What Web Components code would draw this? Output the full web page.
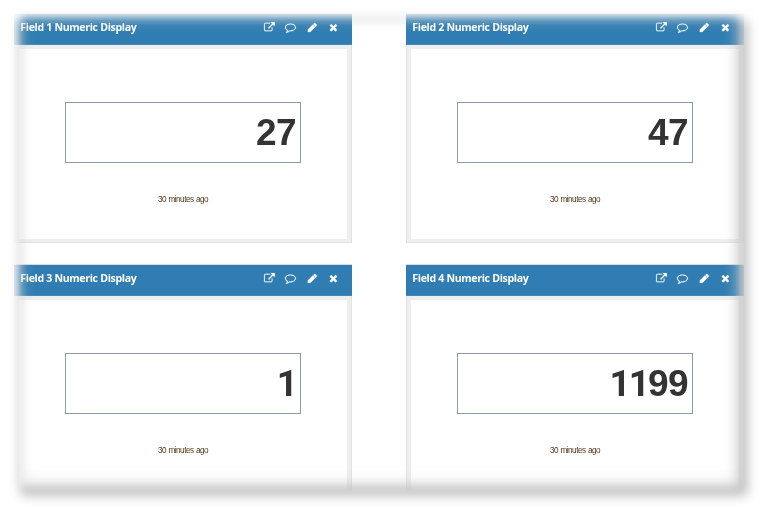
<!DOCTYPE html>
<html lang="en"><head><meta charset="utf-8"><title>Channel fields</title>
<style>html,body{margin:0;background:#fff;height:516px;overflow:hidden}</style></head><body>
<channel-board></channel-board>
<script>
const ICONS={
open:'M1408 928v320q0 119-84.5 203.5t-203.5 84.5h-832q-119 0-203.5-84.5t-84.5-203.5v-832q0-119 84.5-203.5t203.5-84.5h704q14 0 23 9t9 23v64q0 14-9 23t-23 9h-704q-66 0-113 47t-47 113v832q0 66 47 113t113 47h832q66 0 113-47t47-113v-320q0-14 9-23t23-9h64q14 0 23 9t9 23zm384-864v512q0 26-19 45t-45 19-45-19l-176-176-652 652q-10 10-23 10t-23-10l-114-114q-10-10-10-23t10-23l652-652-176-176q-19-19-19-45t19-45 45-19h512q26 0 45 19t19 45z',
comment:'M896 384q-204 0-381.5 69.5t-282 187.5-104.5 255q0 112 71.5 213.5t201.5 175.5l87 50-27 96q-24 91-70 172 152-63 275-171l43-38 57 6q69 8 130 8 204 0 381.5-69.5t282-187.5 104.5-255-104.5-255-282-187.5-381.5-69.5zm896 512q0 174-120 321.5t-326 233-450 85.5q-70 0-145-8-198 175-460 242-49 14-114 22h-5q-15 0-27-10.5t-16-27.5v-1q-3-4-.5-12t2-10 4.5-9.5l6-9 7-8.5 8-9q7-8 31-34.5t34.5-38 31-39.5 32.5-51 27-59 26-76q-157-89-247.5-220t-90.5-281q0-174 120-321.5t326-233 450-85.5 450 85.5 326 233 120 321.5z',
edit:'M960 416l416 416-832 832h-416v-416zm683 96q0 53-37 90l-166 166-416-416 166-165q36-38 90-38 53 0 91 38l235 234q37 39 37 91z',
close:'M1490 1322q0 40-28 68l-136 136q-28 28-68 28t-68-28l-294-294-294 294q-28 28-68 28t-68-28l-136-136q-28-28-28-68t28-68l294-294-294-294q-28-28-28-68t28-68l136-136q28-28 68-28t68 28l294 294 294-294q28-28 68-28t68 28l136 136q28 28 28 68t-28 68l-294 294 294 294q28 28 28 68z'};
class ToolIcon extends HTMLElement{
 connectedCallback(){this.attachShadow({mode:'open'}).innerHTML=`<style>:host{display:block;width:10.8px;height:10.8px}svg{display:block;width:100%;height:100%;fill:#fff;stroke:#fff;stroke-width:30;overflow:visible}</style><svg viewBox="0 0 1792 1792"><path d="${ICONS[this.getAttribute('name')]}"/></svg>`}
}
customElements.define('tool-icon',ToolIcon);
class NumericPanel extends HTMLElement{
 connectedCallback(){this.attachShadow({mode:'open'}).innerHTML=`<style>
 :host{display:flex;flex-direction:column;height:230px;box-sizing:border-box;background:#eee}
 header{flex:none;height:32px;box-sizing:border-box;display:flex;align-items:center;padding:0 12.8px 4px 6.3px;background:#2f7db2;border-top:1px solid #d5dde3;border-bottom:1px solid #4488b5;color:#fff;font:700 10.6px "Trebuchet MS","Open Sans",sans-serif;letter-spacing:-.34px}
 .title{flex:1;white-space:nowrap}
 nav{display:flex;gap:10.8px}
 .frame{flex:1;box-sizing:border-box;border:1px solid #e2e2e2;border-top:0;padding:4px 4px 3px}
 .body{height:100%;box-sizing:border-box;background:#fff;display:flex;flex-direction:column;align-items:center;padding-top:53px}
 .value{width:236px;height:60.5px;box-sizing:border-box;border:1px solid #8b99a8;padding-right:4px;text-align:right;font:700 37px/60px "Liberation Sans",Arial,sans-serif;letter-spacing:-.6px;color:#333}
 ::slotted(.ones){font-family:Roboto,sans-serif;letter-spacing:-2px}
 .time{margin-top:31.5px;font:8.2px/12px "Liberation Sans",Arial,sans-serif;letter-spacing:-.5px;word-spacing:.6px;color:#553a18}
 </style><header><div class="title"><slot name="title"></slot></div><nav><tool-icon name="open"></tool-icon><tool-icon name="comment"></tool-icon><tool-icon name="edit"></tool-icon><tool-icon name="close"></tool-icon></nav></header>
 <div class="frame"><div class="body"><div class="value"><slot></slot></div><div class="time"><slot name="time"></slot></div></div></div>`}
}
customElements.define('numeric-panel',NumericPanel);
class ChannelBoard extends HTMLElement{
 connectedCallback(){
 const p=[[1,27],[2,47],[3,1],[4,1199]].map(([n,v])=>`<numeric-panel><span slot="title">Field ${n} Numeric Display</span>${String(v).replace(/1+/,'<span class="ones">$&</span>')}<span slot="time">30 minutes ago</span></numeric-panel>`).join('');
 this.attachShadow({mode:'open'}).innerHTML=`<style>
 :host{display:block;position:relative;width:766px;height:516px;box-sizing:border-box;padding:13px 22px 24px 14px}
 .shadow{position:absolute;left:20px;top:20px;right:18px;bottom:20px;border-radius:5px;background:rgba(0,0,0,.24);filter:blur(5.5px)}
 .sheet{position:relative;display:grid;grid-template-columns:338px 338px;grid-auto-rows:230px;gap:21px 54px;width:729.5px;height:479px;overflow:hidden;background:#fff;
 mask-image:linear-gradient(90deg,rgba(0,0,0,.15),rgba(0,0,0,.32) 4px,rgba(0,0,0,.7) 9px,rgba(0,0,0,.93) 14px,#000 20px,#000 calc(100% - 22px),rgba(0,0,0,.93) calc(100% - 15px),rgba(0,0,0,.7) calc(100% - 9px),rgba(0,0,0,.32) calc(100% - 4px),rgba(0,0,0,.15)),linear-gradient(rgba(0,0,0,.15),rgba(0,0,0,.32) 3px,rgba(0,0,0,.7) 8px,rgba(0,0,0,.93) 13px,#000 20px,#000 calc(100% - 24px),rgba(0,0,0,.93) calc(100% - 16px),rgba(0,0,0,.7) calc(100% - 10px),rgba(0,0,0,.32) calc(100% - 5px),rgba(0,0,0,.1));mask-composite:intersect}
 </style><div class="shadow"></div><div class="sheet">${p}</div>`}
}
customElements.define('channel-board',ChannelBoard);
</script></body></html>
